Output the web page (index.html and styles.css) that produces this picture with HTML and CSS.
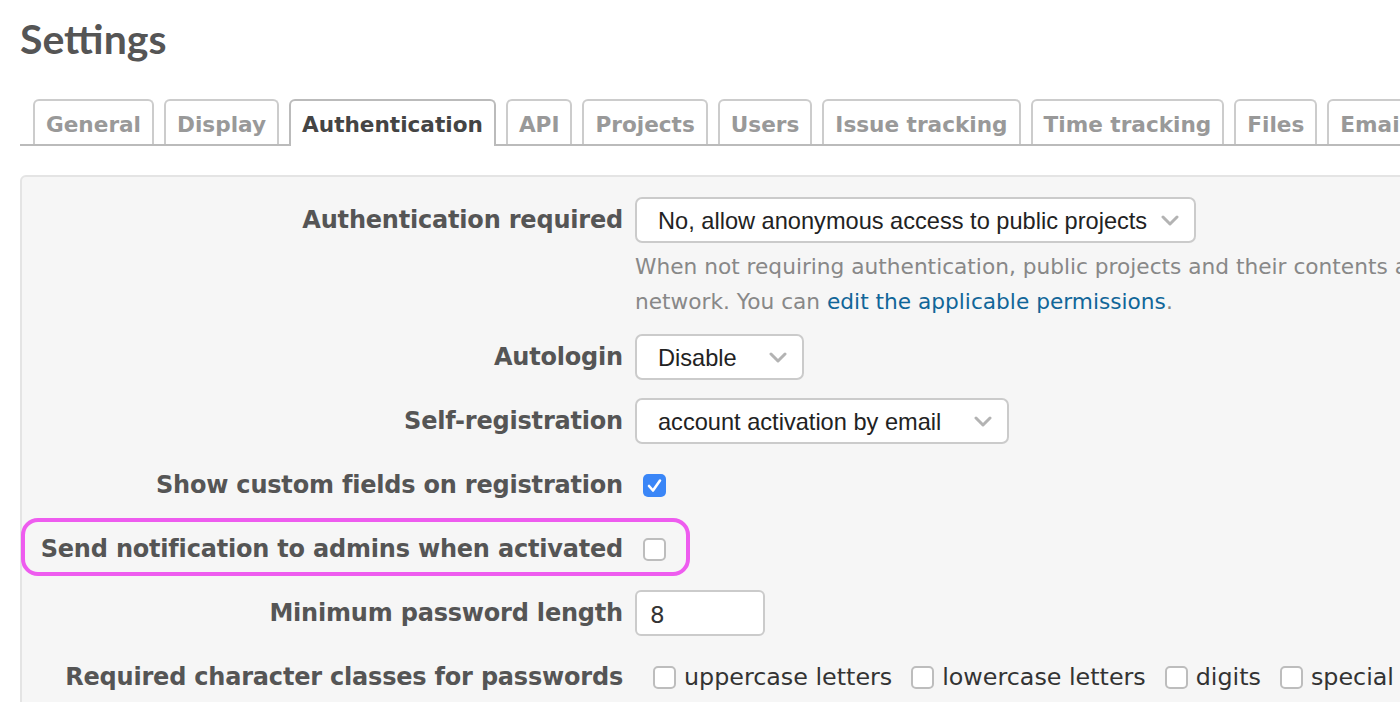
FILE: index.html
```html
<!DOCTYPE html>
<html lang="en">
<head>
<meta charset="utf-8">
<title>Settings</title>
<link rel="stylesheet" href="styles.css">
</head>
<body>
<div class="page">
  <h2 class="title">Settings</h2>
  <div class="tabs">
    <a class="tab">General</a>
    <a class="tab">Display</a>
    <a class="tab active">Authentication</a>
    <a class="tab">API</a>
    <a class="tab">Projects</a>
    <a class="tab">Users</a>
    <a class="tab">Issue tracking</a>
    <a class="tab">Time tracking</a>
    <a class="tab">Files</a>
    <a class="tab">Email notifications</a>
    <a class="tab">Incoming emails</a>
    <a class="tab">Repositories</a>
  </div>

  <div class="box">
    <div class="row row-hint">
      <label class="lbl">Authentication required</label>
      <div class="ctl-col">
        <div class="select w-auth"><span>No, allow anonymous access to public projects</span><svg class="chev" viewBox="0 0 18 11" width="18" height="11"><polyline points="2,2 9,9 16,2"/></svg></div>
        <p class="hint">When not requiring authentication, public projects and their contents are openly available on the<br>network. You can <a class="link">edit the applicable permissions</a>.</p>
      </div>
    </div>

    <div class="row">
      <label class="lbl">Autologin</label>
      <div class="ctl">
        <div class="select w-auto"><span>Disable</span><svg class="chev" viewBox="0 0 18 11" width="18" height="11"><polyline points="2,2 9,9 16,2"/></svg></div>
      </div>
    </div>

    <div class="row">
      <label class="lbl">Self-registration</label>
      <div class="ctl">
        <div class="select w-self"><span>account activation by email</span><svg class="chev" viewBox="0 0 18 11" width="18" height="11"><polyline points="2,2 9,9 16,2"/></svg></div>
      </div>
    </div>

    <div class="row">
      <label class="lbl">Show custom fields on registration</label>
      <div class="ctl">
        <span class="cb checked"><svg viewBox="0 0 23 23" width="23" height="23"><polyline points="6,12 10,16.5 17,6.5"/></svg></span>
      </div>
    </div>

    <div class="row hl">
      <label class="lbl">Send notification to admins when activated</label>
      <div class="ctl">
        <span class="cb"></span>
      </div>
      <span class="mark"></span>
    </div>

    <div class="row">
      <label class="lbl">Minimum password length</label>
      <div class="ctl">
        <div class="input">8</div>
      </div>
    </div>

    <div class="row">
      <label class="lbl">Required character classes for passwords</label>
      <div class="ctl classes">
        <span class="opt"><span class="cb"></span>uppercase letters</span>
        <span class="opt"><span class="cb"></span>lowercase letters</span>
        <span class="opt"><span class="cb"></span>digits</span>
        <span class="opt"><span class="cb"></span>special characters</span>
      </div>
    </div>

    <div class="row">
      <label class="lbl">Require password change on first login</label>
      <div class="ctl">
        <span class="cb"></span>
      </div>
    </div>
  </div>
</div>
</body>
</html>
```

FILE: styles.css
```css
html, body {
  margin: 0;
  padding: 0;
  background: #fff;
  overflow: hidden;
}

body {
  font-family: "DejaVu Sans", Verdana, sans-serif;
  font-size: 24px;
  color: #333;
}

.page {
  padding-left: 20px;
  width: 1700px;
}

.title {
  margin: 14px 0 0 0;
  font-family: Lato, "DejaVu Sans", sans-serif;
  font-weight: 700;
  font-size: 41px;
  line-height: 49px;
  color: #555;
}

.tabs {
  margin-top: 36px;
  display: flex;
  gap: 10px;
  padding-left: 13px;
  border-bottom: 2px solid #bbb;
  height: 45px;
}

.tab {
  box-sizing: border-box;
  height: 45px;
  padding: 2px 11px 0 11px;
  border: 2px solid #ccc;
  border-bottom: none;
  border-radius: 6px 6px 0 0;
  background: #fff;
  color: #999;
  font-weight: 700;
  font-size: 21.6px;
  line-height: 43px;
  white-space: nowrap;
}

.tab.active {
  height: 47px;
  border-color: #bbb;
  color: #444;
  position: relative;
}

.box {
  margin-top: 29px;
  background: #f6f6f6;
  border: 2px solid #e4e4e4;
  border-radius: 6px;
  padding: 20px 0 40px 0;
}

.row {
  display: grid;
  grid-template-columns: 601px 1fr;
  column-gap: 12px;
  align-items: start;
  margin-bottom: 18px;
  position: relative;
}

.row-hint {
  margin-bottom: 15px;
}

.lbl {
  text-align: right;
  font-weight: 700;
  font-size: 24px;
  letter-spacing: -0.2px;
  line-height: 46px;
  color: #555;
  white-space: nowrap;
}

.ctl {
  height: 46px;
  display: flex;
  align-items: center;
}

.select {
  box-sizing: border-box;
  height: 46px;
  display: flex;
  align-items: center;
  padding: 2px 15px 0 21px;
  border: 2px solid #cbcbcb;
  border-radius: 7px;
  background: #fff;
  font-family: "Liberation Sans", Arial, sans-serif;
  font-size: 23.6px;
  color: #222;
  white-space: nowrap;
}

.select .chev {
  margin-left: auto;
  margin-top: -2px;
  fill: none;
  stroke: #b3b3b3;
  stroke-width: 3;
  stroke-linecap: round;
  stroke-linejoin: round;
}

.w-auth { width: 561px; }
.w-auto { width: 169px; }
.w-self { width: 374px; }

.hint {
  margin: 6px 0 0 0;
  font-size: 21.7px;
  line-height: 35px;
  color: #888;
  white-space: nowrap;
}

.link {
  color: #169;
}

.cb {
  box-sizing: border-box;
  display: inline-block;
  width: 23px;
  height: 23px;
  border: 2px solid #bdbdbd;
  border-radius: 5px;
  background: #fff;
  margin-left: 8px;
  flex: none;
}

.cb.checked {
  border: none;
  background: #3a86f7;
}

.cb.checked svg {
  display: block;
  fill: none;
  stroke: #fff;
  stroke-width: 2.6;
  stroke-linecap: round;
  stroke-linejoin: round;
}

.input {
  box-sizing: border-box;
  width: 130px;
  height: 46px;
  border: 2px solid #cbcbcb;
  border-radius: 6px;
  background: #fff;
  padding: 2px 0 0 13px;
  line-height: 42px;
  font-size: 23px;
  color: #333;
}

.classes {
  padding-left: 18px;
  gap: 19px;
  white-space: nowrap;
}

.opt {
  display: flex;
  align-items: center;
  gap: 8px;
  font-size: 23.8px;
  color: #333;
}

.opt .cb {
  margin-left: 0;
}

.mark {
  position: absolute;
  left: -1px;
  top: -8px;
  width: 669px;
  height: 58px;
  box-sizing: border-box;
  border: 4px solid #ee5cef;
  border-radius: 17px;
  pointer-events: none;
}
```
